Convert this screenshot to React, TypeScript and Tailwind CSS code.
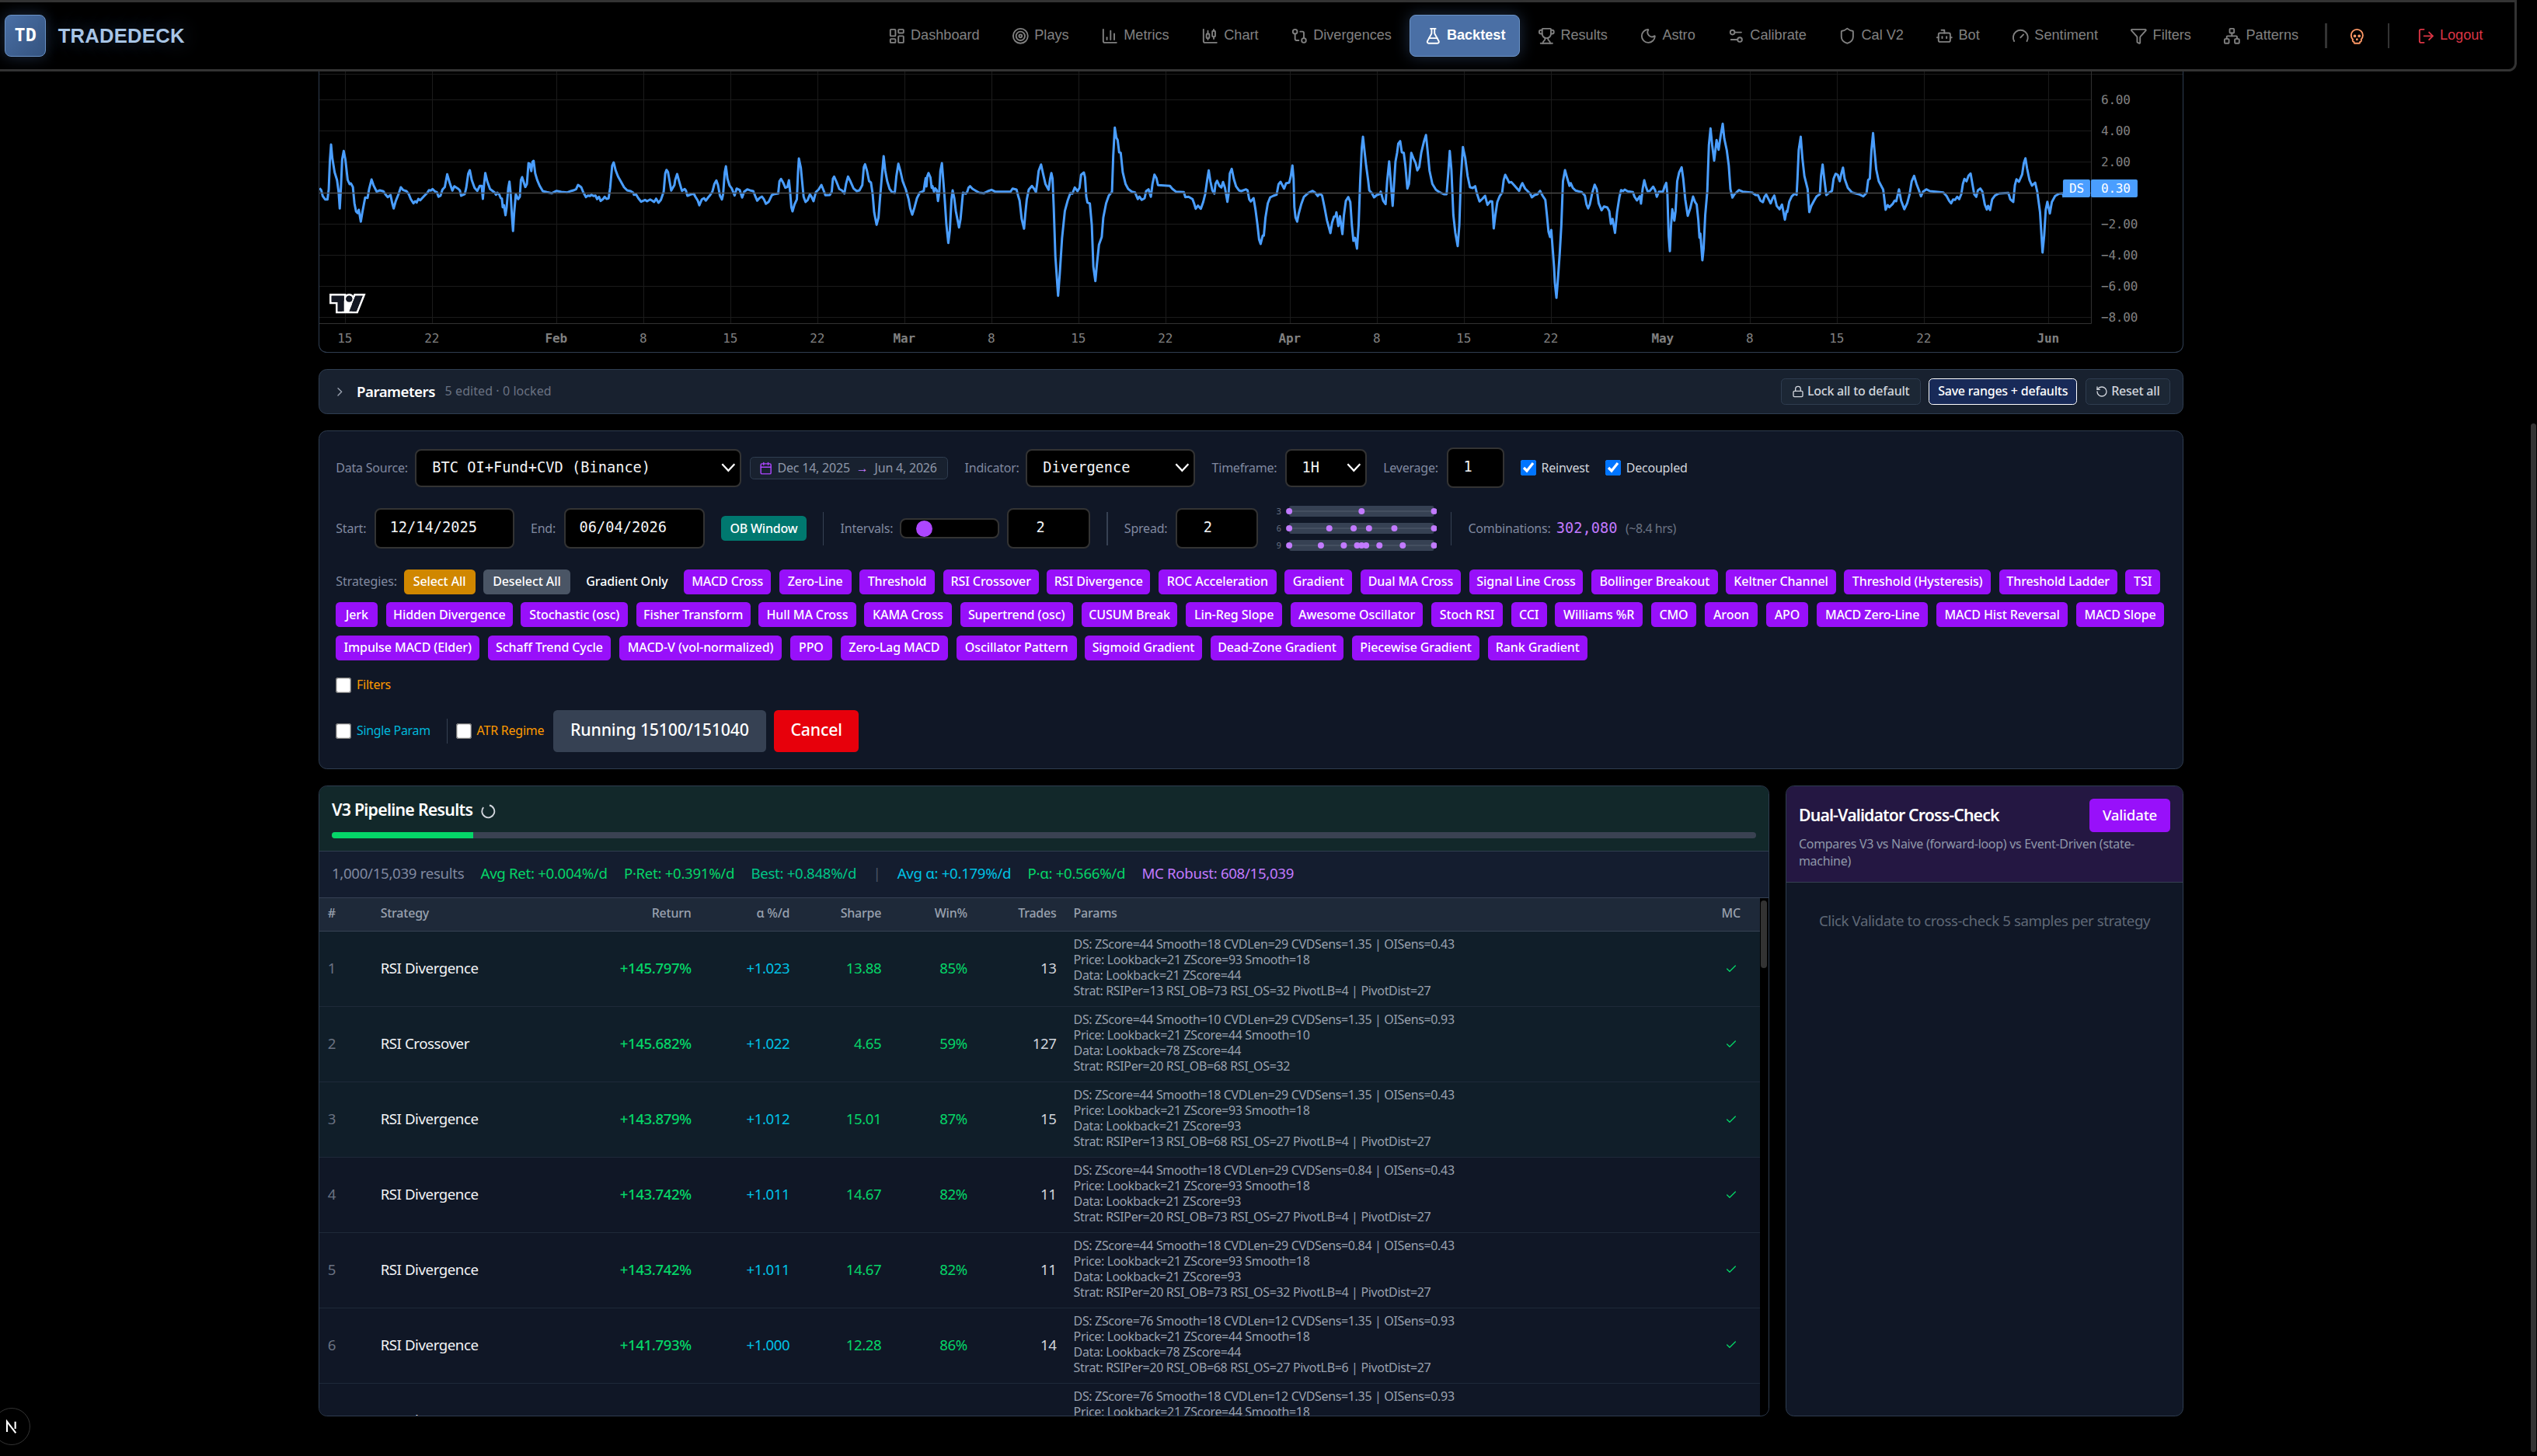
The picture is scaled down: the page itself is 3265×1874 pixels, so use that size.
import type { ReactNode } from 'react'
import {
  Bot,
  Calendar,
  ChartCandlestick,
  ChartColumn,
  Check,
  ChevronRight,
  FlaskConical,
  Funnel,
  Gauge,
  GitCompare,
  LayoutDashboard,
  Lock,
  LogOut,
  Moon,
  Network,
  RotateCcw,
  Settings2,
  Shield,
  Skull,
  Target,
  Trophy,
  type LucideIcon,
} from 'lucide-react'

/* ---------- data ---------- */

const NAV: { label: string; icon: LucideIcon; active?: boolean }[] = [
  { label: 'Dashboard', icon: LayoutDashboard },
  { label: 'Plays', icon: Target },
  { label: 'Metrics', icon: ChartColumn },
  { label: 'Chart', icon: ChartCandlestick },
  { label: 'Divergences', icon: GitCompare },
  { label: 'Backtest', icon: FlaskConical, active: true },
  { label: 'Results', icon: Trophy },
  { label: 'Astro', icon: Moon },
  { label: 'Calibrate', icon: Settings2 },
  { label: 'Cal V2', icon: Shield },
  { label: 'Bot', icon: Bot },
  { label: 'Sentiment', icon: Gauge },
  { label: 'Filters', icon: Funnel },
  { label: 'Patterns', icon: Network },
]

const STRATEGIES: [string, string][][] = [
  [
    ['MACD Cross', 'w-[84px]'],
    ['Zero-Line', 'w-[69.5px]'],
    ['Threshold', 'w-[72.5px]'],
    ['RSI Crossover', 'w-[92.5px]'],
    ['RSI Divergence', 'w-[99.5px]'],
    ['ROC Acceleration', 'w-[114px]'],
    ['Gradient', 'w-[65px]'],
    ['Dual MA Cross', 'w-[97px]'],
    ['Signal Line Cross', 'w-[110px]'],
    ['Bollinger Breakout', 'w-[122px]'],
    ['Keltner Channel', 'w-[106px]'],
    ['Threshold (Hysteresis)', 'w-[141.5px]'],
    ['Threshold Ladder', 'w-[114px]'],
    ['TSI', 'w-[33.5px]'],
  ],
  [
    ['Jerk', 'w-[40.5px]'],
    ['Hidden Divergence', 'w-[122px]'],
    ['Stochastic (osc)', 'w-[103.5px]'],
    ['Fisher Transform', 'w-[110px]'],
    ['Hull MA Cross', 'w-[94px]'],
    ['KAMA Cross', 'w-[84.5px]'],
    ['Supertrend (osc)', 'w-[109px]'],
    ['CUSUM Break', 'w-[93px]'],
    ['Lin-Reg Slope', 'w-[93px]'],
    ['Awesome Oscillator', 'w-[128px]'],
    ['Stoch RSI', 'w-[69px]'],
    ['CCI', 'w-[34.5px]'],
    ['Williams %R', 'w-[84.5px]'],
    ['CMO', 'w-[44px]'],
    ['Aroon', 'w-[51px]'],
    ['APO', 'w-[41px]'],
    ['MACD Zero-Line', 'w-[107.5px]'],
    ['MACD Hist Reversal', 'w-[127px]'],
    ['MACD Slope', 'w-[85px]'],
  ],
  [
    ['Impulse MACD (Elder)', 'w-[138.5px]'],
    ['Schaff Trend Cycle', 'w-[119px]'],
    ['MACD-V (vol-normalized)', 'w-[157px]'],
    ['PPO', 'w-[40.5px]'],
    ['Zero-Lag MACD', 'w-[104px]'],
    ['Oscillator Pattern', 'w-[116px]'],
    ['Sigmoid Gradient', 'w-[113px]'],
    ['Dead-Zone Gradient', 'w-[129px]'],
    ['Piecewise Gradient', 'w-[123px]'],
    ['Rank Gradient', 'w-[96px]'],
  ],
]

const SPREAD_ROWS = [
  { n: 3, stops: [0, 0.5, 1] },
  { n: 6, stops: [0, 0.277, 0.445, 0.551, 0.726, 1] },
  { n: 9, stops: [0, 0.219, 0.377, 0.469, 0.5, 0.531, 0.623, 0.784, 1] },
]

interface Result {
  strategy: string
  ret: string
  alpha: string
  sharpe: string
  win: string
  trades: number
  params: string[]
}

const RESULTS: Result[] = [
  {
    strategy: 'RSI Divergence', ret: '+145.797%', alpha: '+1.023', sharpe: '13.88', win: '85%', trades: 13,
    params: [
      'DS: ZScore=44 Smooth=18 CVDLen=29 CVDSens=1.35 | OISens=0.43',
      'Price: Lookback=21 ZScore=93 Smooth=18',
      'Data: Lookback=21 ZScore=44',
      'Strat: RSIPer=13 RSI_OB=73 RSI_OS=32 PivotLB=4 | PivotDist=27',
    ],
  },
  {
    strategy: 'RSI Crossover', ret: '+145.682%', alpha: '+1.022', sharpe: '4.65', win: '59%', trades: 127,
    params: [
      'DS: ZScore=44 Smooth=10 CVDLen=29 CVDSens=1.35 | OISens=0.93',
      'Price: Lookback=21 ZScore=44 Smooth=10',
      'Data: Lookback=78 ZScore=44',
      'Strat: RSIPer=20 RSI_OB=68 RSI_OS=32',
    ],
  },
  {
    strategy: 'RSI Divergence', ret: '+143.879%', alpha: '+1.012', sharpe: '15.01', win: '87%', trades: 15,
    params: [
      'DS: ZScore=44 Smooth=18 CVDLen=29 CVDSens=1.35 | OISens=0.43',
      'Price: Lookback=21 ZScore=93 Smooth=18',
      'Data: Lookback=21 ZScore=93',
      'Strat: RSIPer=13 RSI_OB=68 RSI_OS=27 PivotLB=4 | PivotDist=27',
    ],
  },
  {
    strategy: 'RSI Divergence', ret: '+143.742%', alpha: '+1.011', sharpe: '14.67', win: '82%', trades: 11,
    params: [
      'DS: ZScore=44 Smooth=18 CVDLen=29 CVDSens=0.84 | OISens=0.43',
      'Price: Lookback=21 ZScore=93 Smooth=18',
      'Data: Lookback=21 ZScore=93',
      'Strat: RSIPer=20 RSI_OB=73 RSI_OS=27 PivotLB=4 | PivotDist=27',
    ],
  },
  {
    strategy: 'RSI Divergence', ret: '+143.742%', alpha: '+1.011', sharpe: '14.67', win: '82%', trades: 11,
    params: [
      'DS: ZScore=44 Smooth=18 CVDLen=29 CVDSens=0.84 | OISens=0.43',
      'Price: Lookback=21 ZScore=93 Smooth=18',
      'Data: Lookback=21 ZScore=93',
      'Strat: RSIPer=20 RSI_OB=73 RSI_OS=32 PivotLB=4 | PivotDist=27',
    ],
  },
  {
    strategy: 'RSI Divergence', ret: '+141.793%', alpha: '+1.000', sharpe: '12.28', win: '86%', trades: 14,
    params: [
      'DS: ZScore=76 Smooth=18 CVDLen=12 CVDSens=1.35 | OISens=0.93',
      'Price: Lookback=21 ZScore=44 Smooth=18',
      'Data: Lookback=78 ZScore=44',
      'Strat: RSIPer=20 RSI_OB=68 RSI_OS=27 PivotLB=6 | PivotDist=27',
    ],
  },
  {
    strategy: 'RSI Divergence', ret: '+141.793%', alpha: '+1.000', sharpe: '12.28', win: '86%', trades: 14,
    params: [
      'DS: ZScore=76 Smooth=18 CVDLen=12 CVDSens=1.35 | OISens=0.93',
      'Price: Lookback=21 ZScore=44 Smooth=18',
      'Data: Lookback=78 ZScore=44',
      'Strat: RSIPer=20 RSI_OB=68 RSI_OS=32 PivotLB=6 | PivotDist=27',
    ],
  },
]

// Oscillator samples, one chunk per stretch of the time axis.
const SERIES = [
  {
    from: 400,
    step: 1 / 1.96,
    pts: '22,457 26,464 30,487 36,500 42,500 45,462 48,350 51,288 54,340 60,395 66,425 70,470 73,535 76,450 79,345 83,313 87,345 93,425 98,441 101,438 106,452 110,515 114,547 118,553 121,540 126,586 130,550 137,493 143,494 147,460 153,423 158,445 166,470 174,465 183,469 189,482 194,491 201,483 205,513 209,535 214,507 221,480 227,453 233,464 241,468 247,479 252,499 259,515 263,507 267,512 271,498 276,503 284,490 294,474 298,464 303,466 307,460 313,469 318,472 322,490 327,486 332,462 338,452 344,403 350,435 357,466 362,449 371,458 376,465 379,486 388,480 392,455 397,400 401,387 406,425 413,455 420,467 426,448 431,448 434,498 437,440 440,398 445,430 452,460 459,468 464,474 467,482 470,474 475,480 479,495 482,497 484,530 487,522 491,561 494,530 498,455 501,431 504,475 507,560 510,622 513,550 517,480 523,499 527,490 530,425 533,414 541,452 545,440 549,360 552,362 556,391 559,355 562,351 566,400 571,425 577,447 585,468 595,472 608,476 620,467 632,471 647,473 657,467 664,464 669,461 674,444 682,453 687,472 694,491 699,485 704,487 708,482 713,487 718,485 722,499 727,490 731,506 737,499 741,490 746,498 751,496 755,455 760,370 764,357 769,388 775,412 781,428 790,453 798,465 807,468 813,474 815,482 820,480 826,495 833,509 843,502 848,507 856,500 861,505 866,510 871,497 877,513 883,502 890,470 894,400 897,386 901,395 909,466 917,445 919,425 924,402 929,430 936,467 943,460 946,466 950,486 958,481 966,478 970,490 976,505 980,523 986,500 992,495 996,505 1002,493 1007,484 1013,470 1018,440 1023,427 1027,445 1032,485 1037,500 1040,480 1044,395 1047,372 1051,420 1056,446 1062,458 1069,485 1074,458 1082,464 1088,493 1093,470 1101,461 1110,466 1116,468 1121,487 1126,505 1132,494 1138,489 1143,500 1148,517 1155,509 1163,483 1170,479 1179,477 1182,430 1186,421 1191,434 1197,455 1202,452 1206,426 1209,470 1212,530 1215,546 1220,520 1226,500 1229,395 1231,342 1236,377 1239,425 1243,490 1248,510 1253,503 1259,480 1263,490 1268,507 1274,472 1281,461 1288,444 1294,467 1298,484 1309,483 1314,470 1317,420 1320,412 1326,432 1333,460 1340,466 1346,477 1350,440 1355,412 1361,430 1369,458 1377,468 1384,465 1391,445 1395,375 1398,364 1403,390 1408,429 1413,435 1417,478 1421,550 1427,598 1432,570 1436,490 1441,400 1445,333 1449,390 1454,430 1460,460 1466,472 1473,475 1477,410 1482,362 1487,390 1493,430 1501,462 1508,500 1512,535 1517,559 1523,530 1529,495 1536,474 1542,470 1546,467 1549,435 1551,418 1553,450 1555,410 1558,398 1563,415 1566,455',
  },
  {
    from: 1200,
    step: 1 / 1.96,
    pts: '0,448 4,470 7,457 11,465 14,506 17,475 20,390 24,360 28,440 31,500 35,595 40,668 44,620 48,500 51,465 55,495 59,545 67,608 71,575 77,474 84,478 88,470 91,455 95,449 101,459 110,467 118,474 130,476 140,468 149,463 158,470 197,470 202,458 212,462 216,485 220,505 225,575 231,613 234,560 238,500 243,462 251,448 257,460 261,472 264,440 268,390 274,365 279,400 285,440 293,463 297,420 300,398 303,420 306,530 310,720 317,872 321,790 327,650 334,545 341,505 348,475 353,478 359,454 366,468 371,455 375,405 382,396 385,415 388,490 391,512 397,516 402,600 406,760 411,815 415,750 420,675 427,645 431,570 438,515 445,485 453,470 456,330 460,223 464,262 467,270 471,318 475,320 480,395 487,440 494,460 503,470 511,473 518,499 522,489 528,502 535,496 539,468 545,461 551,490 555,440 560,404 565,418 569,445 599,448 605,459 614,470 634,472 638,491 646,490 656,499 660,515 664,536 670,524 677,536 683,510 688,480 694,415 697,388 701,430 706,465 711,478 714,440 718,428 724,448 729,454 733,433 738,455 744,509 747,480 750,400 755,382 760,420 766,450 773,465 779,468 791,461 795,465 799,500 803,508 810,495 815,540 820,600 824,655 828,672 833,640 836,640 840,570 846,515 852,492 860,486 868,482 873,442 878,432 887,458 892,438 900,435 904,410 908,369 911,420 913,530 916,570 920,586 924,555 930,520 937,490 948,475 959,467 966,475 972,487 977,478 983,485 989,530 995,580 1004,630 1008,590 1013,567 1017,565 1019,550 1024,603 1028,565 1034,634 1038,560 1043,505 1049,491 1054,510 1058,600 1062,660 1066,648 1071,690 1075,600 1079,430 1083,300 1086,258 1089,300 1094,370 1099,425 1102,465 1108,475 1114,492 1121,483 1127,480 1131,470 1137,505 1143,518 1147,430 1152,353 1156,430 1161,525 1164,450 1168,355 1172,320 1175,285 1180,275 1184,318 1189,320 1193,370 1198,458 1202,440 1205,380 1208,320 1213,340 1219,360 1223,388 1228,375 1233,320 1240,275 1245,251 1249,310 1254,390 1261,440 1270,463 1280,473 1290,480 1297,480 1301,400 1305,313 1309,385 1314,560 1319,630 1325,680 1329,600 1333,420 1338,298 1344,340 1350,410 1356,453 1363,456 1369,449 1373,475 1380,508 1387,498 1394,486 1400,521 1407,507 1412,508 1416,612 1420,560 1425,510 1431,487 1437,474 1441,425 1445,405 1450,420 1455,435 1460,433 1468,446 1480,467 1484,450 1488,437 1495,458 1503,470 1508,478 1512,492 1519,483 1526,480 1533,467 1539,485 1546,502 1550,560 1554,625 1558,645 1561,618 1565,700',
  },
  {
    from: 2000,
    step: 1 / 1.912,
    pts: '0,760 2,820 6,880 9,820 14,710 18,600 22,430 27,387 32,415 38,448 41,437 46,455 53,466 60,469 68,472 76,485 80,520 84,535 88,520 94,475 100,443 105,460 110,515 117,542 123,527 131,531 136,545 140,595 144,575 150,629 155,550 161,490 165,464 170,468 174,462 181,469 194,472 198,490 204,504 211,488 214,516 218,460 222,426 226,450 230,468 236,467 244,451 249,465 253,490 258,470 268,470 272,450 276,436 279,480 282,640 285,700 288,600 291,538 296,582 299,545 303,430 308,395 314,376 318,420 323,500 329,563 335,535 342,489 347,510 351,520 355,580 358,648 360,632 365,735 368,690 372,560 377,470 381,290 385,226 389,290 394,350 400,271 405,308 410,255 415,208 419,265 425,310 430,370 434,460 439,493 444,480 455,464 464,470 488,474 496,483 502,484 508,505 514,511 518,490 522,481 528,500 533,515 538,495 542,485 548,525 555,538 561,520 568,578 572,545 574,548 579,508 585,488 592,478 597,482 599,420 602,310 607,258 611,340 616,410 624,460 628,549 633,525 640,505 646,488 654,480 657,410 661,365 665,420 670,483 676,475 684,467 688,420 693,401 698,405 703,430 707,400 711,377 715,420 723,455 733,473 750,480 761,488 769,475 773,425 777,420 781,310 785,244 788,300 793,385 799,430 810,462 813,500 816,540 821,522 825,530 833,518 838,505 842,507 849,461 854,505 862,538 869,515 875,480 880,430 886,409 892,440 898,465 903,488 908,470 916,461 925,468 958,473 966,487 972,505 977,515 982,500 987,502 992,490 997,499 1002,480 1006,440 1010,421 1015,430 1020,408 1025,400 1030,445 1034,480 1039,490 1043,465 1049,458 1054,470 1060,520 1065,539 1068,525 1073,541 1078,500 1085,485 1095,477 1118,475 1123,500 1130,510 1134,445 1138,422 1144,432 1152,403 1156,360 1160,341 1164,380 1170,425 1176,447 1184,435 1189,470 1196,550 1202,705 1206,640 1210,540 1214,509 1220,554 1225,510 1233,487 1243,478 1252,476 1254,492',
  },
]

const LINE = SERIES.flatMap(({ from, step, pts }) =>
  pts.split(' ').map((p) => {
    const [x, y] = p.split(',').map(Number)
    return `${(from + x * step).toFixed(1)},${(90 + y / 3).toFixed(1)}`
  }),
).join(' ')

const TICKS: [number, string][] = [
  [444.5, '15'], [556.5, '22'], [716.5, 'Feb'], [828.5, '8'], [940.5, '15'], [1052.5, '22'],
  [1164.5, 'Mar'], [1276.5, '8'], [1388.5, '15'], [1500.5, '22'], [1660.5, 'Apr'], [1772.5, '8'],
  [1884.5, '15'], [1996.5, '22'], [2140.5, 'May'], [2252.5, '8'], [2364.5, '15'], [2476.5, '22'],
  [2636.5, 'Jun'],
]

const LEVELS: [number, string][] = [
  [128.5, '6.00'], [168.5, '4.00'], [208.5, '2.00'], [288.5, '−2.00'], [328.5, '−4.00'],
  [368.5, '−6.00'], [408.5, '−8.00'],
]

/* ---------- header ---------- */

function NavItem({ label, icon: Icon, active }: { label: string; icon: LucideIcon; active?: boolean }) {
  return (
    <a
      className={
        active
          ? 'flex h-10 items-center gap-[5px] rounded-[6px] border border-[#6b93c7] bg-[#4a6fa5] px-[13px] font-bold text-white shadow-[0_0_15px_rgba(74,111,165,0.4)]'
          : 'flex h-10 items-center gap-[5px] px-[13.5px] text-[#808080]'
      }
    >
      <Icon size={17} />
      {label}
    </a>
  )
}

function Header() {
  return (
    <header className="flex h-[69px] w-[2429.25px] items-center justify-between rounded-br-[8px] border-y-[3px] border-r-[3px] border-[#333] bg-black pr-4 pl-[4.5px] font-['Liberation_Sans',Arial,sans-serif] tracking-normal">
      <div className="flex items-center gap-[11.5px]">
        <div className="flex size-10 items-center justify-center rounded-[6px] border border-[#6b93c7] bg-linear-to-br from-[#4a6fa5] to-[#34537f] font-['DejaVu_Sans_Mono',monospace] text-[17.6px] font-bold text-white shadow-[0_0_15px_rgba(74,111,165,0.4)]">
          TD
        </div>
        <span className="text-[19.2px] font-bold tracking-[0.2px] text-[#a8c5e6] [text-shadow:0_0_20px_rgba(74,111,165,0.5)]">
          TRADEDECK
        </span>
      </div>
      <nav className="flex items-center gap-1 text-[13.6px]">
        {NAV.map((item) => (
          <NavItem key={item.label} {...item} />
        ))}
        <span className="mx-2 h-6 w-[2px] bg-[#333]" />
        <a className="flex h-10 w-[34.5px] items-center justify-center text-[#ff9966]">
          <Skull size={17} />
        </a>
        <span className="mx-2 h-6 w-[2px] bg-[#333]" />
        <a className="flex h-10 items-center gap-[5px] px-[14.5px] text-[#dc3545]">
          <LogOut size={17} />
          Logout
        </a>
      </nav>
    </header>
  )
}

/* ---------- oscillator chart ---------- */

function OscillatorChart() {
  return (
    <section className="h-[271.5px] overflow-hidden rounded-b-lg border border-t-0 border-[#2f3d50] bg-black">
      <svg
        viewBox="411 92 2398 361"
        className="block h-full w-full font-['DejaVu_Sans_Mono',monospace]"
        fontSize="16"
        fill="#808080"
      >
        <g stroke="#1c1c1c" strokeWidth="1">
          {TICKS.map(([x]) => (
            <line key={x} x1={x} x2={x} y1="92" y2="416" />
          ))}
          {LEVELS.map(([y]) => (
            <line key={y} x1="411" x2="2691" y1={y} y2={y} />
          ))}
          <line x1="411" x2="2809" y1="95.5" y2="95.5" />
        </g>
        <path d="M411 416.5H2691.5V92" fill="none" stroke="#333" strokeWidth="1" />
        <polyline points={LINE} fill="none" stroke="#4a9eff" strokeWidth="3" strokeLinejoin="round" />
        <line x1="411" x2="2691" y1="248.5" y2="248.5" stroke="#4a4a4a" strokeWidth="1.4" />
        {TICKS.map(([x, label]) => (
          <text key={x} x={x - 0.8} y="441.5" textAnchor="middle" fontWeight={label.length > 2 ? 700 : 400}>
            {label}
          </text>
        ))}
        {LEVELS.map(([y, label]) => (
          <text key={label} x="2704" y={y + 5.2}>
            {label}
          </text>
        ))}
        <rect x="2655" y="231" width="35" height="23" rx="2" fill="#4a9eff" />
        <rect x="2691" y="231" width="60" height="23" rx="2" fill="#4a9eff" />
        <g fill="#fff">
          <text x="2663" y="248">DS</text>
          <text x="2704" y="248">0.30</text>
        </g>
        <g transform="translate(424 378) scale(1.333)">
          <path
            fill="#fff"
            fillRule="evenodd"
            d="M2 0H0v10h6v9h21.4l.5-1.3 6-15 1-2.7H23.7l-.5 1.3-.2.6a5 5 0 0 0-7-.9V0H2zm20 17h4l5.2-13 .8-2h-7l-1 2.5-.2.5-1.5 3.8-.3.7V17zm-.8-10a3 3 0 0 0 .7-2.7A3 3 0 1 0 16.8 7h4.4zM14 7V2H2v6h6v9h4V7h2z"
          />
          <path fill="#131722" d="M14 2H2v6h6v9h6V2zm12 15h-7l6-15h7l-6 15zm-7-9a3 3 0 1 0 0-6 3 3 0 0 0 0 6z" />
        </g>
      </svg>
    </section>
  )
}

/* ---------- parameters bar ---------- */

function ParametersBar() {
  return (
    <section className="flex h-[43px] items-center justify-between rounded-lg border border-[#2f3d50] bg-[#18212f] pr-3 pl-[13px] text-xs">
      <div className="flex items-center">
        <ChevronRight size={14} strokeWidth={1.8} className="mr-[9px] text-gray-400" />
        <span className="mr-[9.5px] text-sm font-semibold tracking-[-0.025em] text-white">Parameters</span>
        <span className="tracking-[0.005em] text-gray-500">5 edited · 0 locked</span>
      </div>
      <div className="flex gap-2 font-medium text-gray-300">
        <button className="flex h-[25.5px] w-[135px] items-center justify-center gap-[3px] rounded border border-[#2f3d50] bg-[#1c2735]">
          <Lock size={12} />
          Lock all to default
        </button>
        <button className="h-[25.5px] w-[143px] rounded border border-white bg-[#182a58] text-white">
          Save ranges + defaults
        </button>
        <button className="flex h-[25.5px] w-[82px] items-center justify-center gap-[3px] rounded border border-[#2f3d50] bg-[#1c2735]">
          <RotateCcw size={12} />
          Reset all
        </button>
      </div>
    </section>
  )
}

/* ---------- form bits ---------- */

function Field({ label, width, children }: { label: string; width: string; children: ReactNode }) {
  return (
    <label className="flex items-center gap-2 whitespace-nowrap">
      <span className={`text-[#8089a0] ${width}`}>{label}</span>
      {children}
    </label>
  )
}

function SelectBox({ value, className }: { value: string; className: string }) {
  return (
    <span
      className={`flex h-[37px] items-center justify-between rounded-[6px] border-2 border-[#333] bg-black pr-1 pl-[15px] font-['DejaVu_Sans_Mono',monospace] text-sm tracking-normal text-gray-100 ${className}`}
    >
      {value}
      <svg width="14" height="9" viewBox="0 0 14 9" fill="none" stroke="#fff" strokeWidth="1.7">
        <path d="M1 1l6 6.4L13 1" />
      </svg>
    </span>
  )
}

function InputBox({ value, className }: { value: string; className: string }) {
  return (
    <span
      className={`flex h-[39px] items-center rounded-[6px] border-2 border-[#333] bg-black pb-0.5 font-['DejaVu_Sans_Mono',monospace] text-sm tracking-normal text-gray-100 ${className}`}
    >
      {value}
    </span>
  )
}

function CheckField({ label, className, checked }: { label: string; className: string; checked?: boolean }) {
  return (
    <label className={`flex items-center gap-[5px] whitespace-nowrap ${className}`}>
      <input type="checkbox" className="size-[15px] shrink-0" defaultChecked={checked} />
      {label}
    </label>
  )
}

function SpreadPreview() {
  return (
    <div className="flex flex-col gap-[6px]">
      {SPREAD_ROWS.map(({ n, stops }) => (
        <div key={n} className="flex h-[10.5px] items-center gap-1 text-[8px] text-gray-500">
          <span className="w-[5px]">{n}</span>
          <svg width="146" height="10.5" viewBox="-3 0 146 10.5">
            <rect width="140" height="10.5" rx="2" fill="#364153" />
            <line x1="0" x2="140" y1="5.25" y2="5.25" stroke="#4a5565" strokeWidth="1" />
            {stops.map((s) => (
              <circle key={s} cx={s * 140} cy="5.25" r="3" fill="#c27aff" />
            ))}
          </svg>
        </div>
      ))}
    </div>
  )
}

function Controls() {
  return (
    <section className="flex h-[327px] flex-col gap-4 rounded-lg border border-[#2f3d50] bg-[#101726] p-4 text-xs">
      <div className="flex h-[39px] items-center gap-4">
        <div className="flex items-center gap-2">
          <Field label="Data Source:" width="w-[68.5px]">
            <SelectBox value="BTC OI+Fund+CVD (Binance)" className="w-[315px]" />
          </Field>
          <span className="flex h-[22px] w-[191.5px] items-center rounded border border-[#2f3d50] bg-[#18212f] pl-2 text-[#8f98a9]">
            <Calendar size={13} className="mr-[5px] text-[#ad46ff]" />
            Dec 14, 2025
            <span className="mx-[6px] text-[#c27aff]">→</span>
            Jun 4, 2026
          </span>
        </div>
        <Field label="Indicator:" width="w-[51px]">
          <SelectBox value="Divergence" className="w-[163.5px]" />
        </Field>
        <Field label="Timeframe:" width="w-[62.5px]">
          <SelectBox value="1H" className="w-[79px]" />
        </Field>
        <Field label="Leverage:" width="w-[53.5px]">
          <InputBox value="1" className="w-[55px] pl-[14.5px]" />
        </Field>
        <CheckField label="Reinvest" className="w-[66px] text-gray-300" checked />
        <CheckField label="Decoupled" className="text-gray-300" checked />
      </div>

      <div className="flex h-[46.5px] items-center gap-4">
        <Field label="Start:" width="w-[29.5px]">
          <InputBox value="12/14/2025" className="w-[134.5px] pl-[13px]" />
        </Field>
        <Field label="End:" width="w-[24.5px]">
          <InputBox value="06/04/2026" className="w-[135.5px] pl-[13px]" />
        </Field>
        <button className="h-6 w-[82px] rounded bg-[#00786f] font-medium text-white">OB Window</button>
        <span className="h-8 w-px bg-[#364153]" />
        <Field label="Intervals:" width="w-[49.5px]">
          <span className="flex h-[19.5px] w-[95.5px] items-center rounded-[6px] border-2 border-[#333] bg-black pl-[14px]">
            <span className="size-4 rounded-full bg-[#ad46ff]" />
          </span>
          <InputBox value="2" className="w-[80px] pl-[26.5px]" />
        </Field>
        <span className="h-8 w-px bg-[#364153]" />
        <Field label="Spread:" width="w-[41.5px]">
          <InputBox value="2" className="w-[79.5px] pl-[25.5px]" />
        </Field>
        <div className="pl-[2px]">
          <SpreadPreview />
        </div>
        <span className="-ml-[3px] h-8 w-px bg-[#364153]" />
        <div className="flex items-center gap-2 text-gray-500">
          <span className="w-[77px] text-[#8089a0]">Combinations:</span>
          <span className="font-['DejaVu_Sans_Mono',monospace] text-sm tracking-normal text-[#c27aff]">302,080</span>
          <span className="tracking-[-0.03em]">(~8.4 hrs)</span>
        </div>
      </div>

      <div className="flex flex-col gap-2 font-medium tracking-[-0.005em] whitespace-nowrap text-white">
        {STRATEGIES.map((row, i) => (
          <div key={i} className="flex items-center gap-2">
            {i === 0 && (
              <>
                <span className="w-[57.5px] font-normal text-[#8089a0]">Strategies:</span>
                <button className="h-6 w-[69px] rounded bg-[#d08700]">Select All</button>
                <button className="h-6 w-[83.5px] rounded bg-[#4a5565]">Deselect All</button>
                <button className="h-6 w-[94px]">Gradient Only</button>
              </>
            )}
            {row.map(([label, width]) => (
              <button key={label} className={`h-6 rounded bg-[#9810fa] ${width}`}>
                {label}
              </button>
            ))}
          </div>
        ))}
      </div>

      <CheckField label="Filters" className="h-4 text-[#fe9a00]" />

      <div className="flex h-[40.5px] items-center gap-2">
        <CheckField label="Single Param" className="mr-2 w-[91px] tracking-[-0.02em] text-[#00b8db]" />
        <span className="h-6 w-px bg-[#364153]" />
        <CheckField label="ATR Regime" className="w-[86px] text-[#fe9a00]" />
        <button className="h-full w-[205px] rounded bg-[#364153] pb-0.5 text-base font-medium text-white">
          Running 15100/151040
        </button>
        <button className="h-full w-[81.5px] rounded bg-[#e7000b] pb-0.5 text-base font-medium text-white">
          Cancel
        </button>
      </div>
    </section>
  )
}

/* ---------- results ---------- */

const GRID = 'grid grid-cols-[51px_200px_116px_95px_88.5px_83px_86px_1fr_56px] items-center'

function ResultsPanel() {
  return (
    <section className="flex w-[1400px] flex-col overflow-hidden rounded-lg border border-[#2f3d50] bg-[#101726]">
      <div className="h-[63px] shrink-0 border-b border-[#2f3d50] bg-[#12282a] p-3">
        <div className="flex h-5 items-center gap-2 text-base font-semibold tracking-[-0.035em] text-white">
          V3 Pipeline Results
          <svg width="14" height="14" viewBox="0 0 14 14" className="mt-[4px]" fill="none" stroke="#d1d5dc" strokeWidth="1.4">
            <path d="M8.2 1.1a6 6 0 1 1-5.8 2" />
          </svg>
        </div>
        <div className="mt-3 h-[6px] overflow-hidden rounded-full bg-[#3a4252]">
          <div className="h-full w-[9.95%] bg-[#05d668]" />
        </div>
      </div>

      <div className="flex h-[45px] shrink-0 items-center gap-4 border-b border-[#364153] bg-[#141d2f] px-3 pb-[1.5px] text-sm tracking-[-0.017em] text-[#05d668]">
        <span className="text-[#8089a0]">1,000/15,039 results</span>
        <span>Avg Ret: +0.004%/d</span>
        <span>P·Ret: +0.391%/d</span>
        <span className="text-[#00c586]">Best: +0.848%/d</span>
        <span className="text-gray-600">|</span>
        <span className="text-[#00c3e6]">Avg α: +0.179%/d</span>
        <span>P·α: +0.566%/d</span>
        <span className="text-[#c27aff]">MC Robust: 608/15,039</span>
      </div>

      <div className="flex min-h-0 flex-1">
        <div className="flex-1 overflow-hidden">
          <div
            className={`${GRID} h-[32.25px] border-b border-[#364153] bg-[#1e2939] pb-0.5 text-xs font-medium text-gray-400`}
          >
            <span className="px-2">#</span>
            <span className="px-2">Strategy</span>
            <span className="px-2 text-right">Return</span>
            <span className="px-2 text-right">α %/d</span>
            <span className="px-2 text-right">Sharpe</span>
            <span className="px-2 text-right">Win%</span>
            <span className="px-2 text-right">Trades</span>
            <span className="px-2 pl-[8.5px]">Params</span>
            <span className="text-center">MC</span>
          </div>
          {RESULTS.map((r, i) => (
            <div
              key={i}
              className={`${GRID} h-[72.75px] border-b border-[#1e2939] pb-px text-sm tracking-[-0.023em] ${i < 3 ? 'bg-[#101e29]' : 'bg-[#101726]'}`}
            >
              <span className="px-2 text-gray-500">{i + 1}</span>
              <span className="px-2 text-gray-100">{r.strategy}</span>
              <span className="px-2 text-right font-medium text-[#05d668]">{r.ret}</span>
              <span className="px-2 text-right text-[#00c3e6]">{r.alpha}</span>
              <span className="px-2 text-right text-[#05d668]">{r.sharpe}</span>
              <span className="px-2 text-right text-[#05d668]">{r.win}</span>
              <span className="px-2 text-right text-gray-300">{r.trades}</span>
              <span className="px-2 pb-[2px] pl-[8.5px] text-xs leading-[15px] tracking-[-0.021em] whitespace-nowrap text-gray-400">
                {r.params.map((line) => (
                  <span key={line} className="block">
                    {line}
                  </span>
                ))}
              </span>
              <Check size={12} className="justify-self-center text-[#05d668]" />
            </div>
          ))}
        </div>
        <div className="w-2 bg-black px-[1px] pt-[2px]">
          <div className="h-[65.5px] rounded-full bg-[#333]" />
        </div>
      </div>
    </section>
  )
}

function ValidatorPanel() {
  return (
    <section className="flex-1 overflow-hidden rounded-lg border border-[#2f3d50] bg-[#101726]">
      <div className="h-[93px] border-b border-[#364153] bg-[#241742] p-3">
        <div className="flex items-center justify-between">
          <h3 className="pb-px text-base font-semibold tracking-[-0.042em] text-white">Dual-Validator Cross-Check</h3>
          <button className="h-8 w-[78px] rounded bg-[#9810fa] pb-px text-sm font-medium text-white">Validate</button>
        </div>
        <p className="mt-[3px] text-xs leading-[16.5px] tracking-[-0.018em] text-[#8f98a9]">
          Compares V3 vs Naive (forward-loop) vs Event-Driven (state-
          <br />
          machine)
        </p>
      </div>
      <p className="pt-[27px] text-center text-sm tracking-[-0.023em] text-[#5f6876]">
        Click Validate to cross-check 5 samples per strategy
      </p>
    </section>
  )
}

export default function App() {
  return (
    <div className="relative h-[1405.5px] overflow-hidden bg-black font-['Noto_Sans','Open_Sans',sans-serif] tracking-[-0.01em] [zoom:1.33333]">
      <Header />
      <main className="ml-[307.5px] flex w-[1800px] flex-col gap-4">
        <OscillatorChart />
        <ParametersBar />
        <Controls />
        <div className="flex h-[608.5px] gap-4">
          <ResultsPanel />
          <ValidatorPanel />
        </div>
      </main>

      {/* dev tools badge */}
      <div className="absolute top-[1359px] -left-[7px] flex size-9 items-center justify-center rounded-full border border-[#333] bg-black">
        <svg width="14" height="14" viewBox="0 0 14 14" fill="none" stroke="#fff" strokeWidth="1.6">
          <path d="M3 12V2l8.5 11M11 2v7" />
        </svg>
      </div>

      {/* page scrollbar */}
      <div className="absolute top-[409px] right-[1px] h-[993px] w-[5px] rounded-full bg-[#333]" />
    </div>
  )
}
